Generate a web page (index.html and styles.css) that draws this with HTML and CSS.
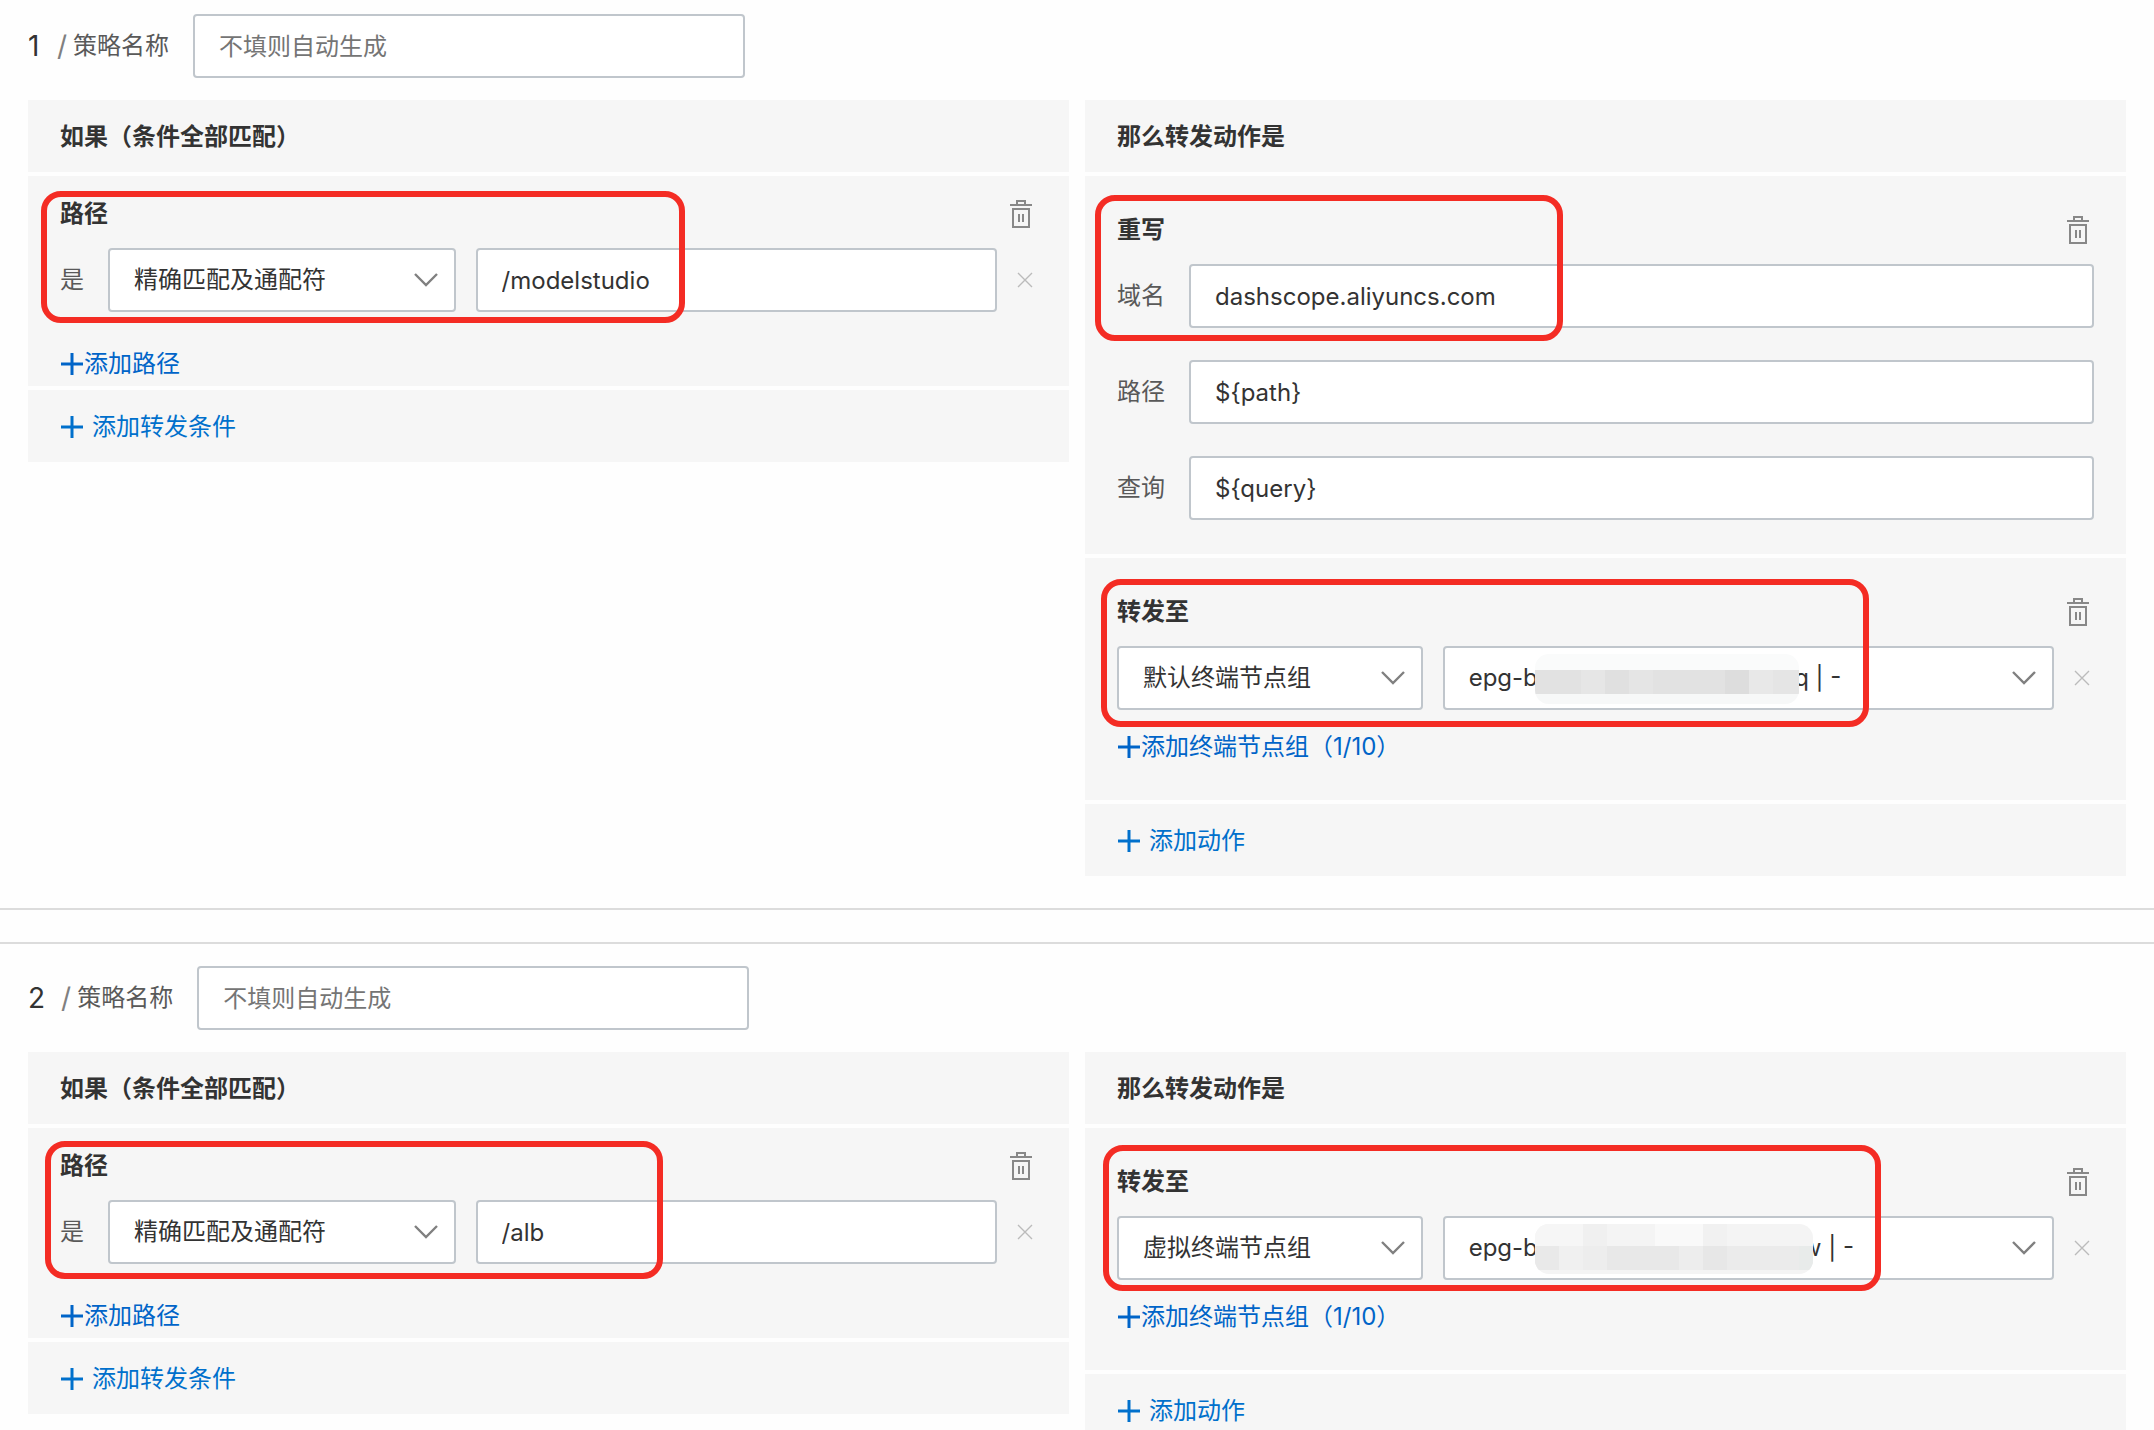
FILE: index.html
```html
<!DOCTYPE html>
<html lang="zh-CN">
<head>
    <meta charset="UTF-8">
    <meta name="viewport" content="width=device-width, initial-scale=1.0">
    <title>转发策略</title>
    <link rel="stylesheet" href="styles.css">
</head>
<body>
    <!-- shared icons -->
    <svg class="sprite" aria-hidden="true">
        <symbol id="trash" viewBox="0 0 22 28">
            <path d="M0 5H22M7 4V1H15V4M3 9H19V27H3ZM9 14V22M13 14V22" fill="none" stroke="currentColor" stroke-width="2"/>
        </symbol>
        <symbol id="close" viewBox="0 0 16 16">
            <path d="M1 1L15 15M15 1L1 15" fill="none" stroke="currentColor" stroke-width="1.4"/>
        </symbol>
        <symbol id="plus" viewBox="0 0 24 24">
            <path d="M1 12H23M12 1V23" fill="none" stroke="currentColor" stroke-width="3"/>
        </symbol>
        <symbol id="arrow" viewBox="0 0 24 14">
            <path d="M1 1L12 12L23 1" fill="none" stroke="currentColor" stroke-width="2.4"/>
        </symbol>
    </svg>

    <section class="rule">
        <div class="rule-name">
            <span class="rule-no">1</span>
            <span class="slash">/</span>
            <label for="name1">策略名称</label>
            <input class="field" type="text" id="name1" placeholder="不填则自动生成">
        </div>
        <div class="columns">
            <div class="column">
                <h2 class="block title">如果（条件全部匹配）</h2>
                <div class="block condition">
                    <div class="block-head">
                        <h3>路径</h3>
                        <button class="icon-btn" type="button" aria-label="删除"><svg width="22" height="28"><use href="#trash"/></svg></button>
                    </div>
                    <div class="row">
                        <label for="match1">是</label>
                        <div class="pair">
                            <div class="select">
                                <select class="field" id="match1"><option>精确匹配及通配符</option></select>
                                <svg class="arrow" width="24" height="14"><use href="#arrow"/></svg>
                            </div>
                            <input class="field" type="text" value="/modelstudio" aria-label="路径">
                        </div>
                        <button class="close-btn" type="button" aria-label="移除"><svg width="16" height="16"><use href="#close"/></svg></button>
                    </div>
                    <a class="add-item" href="#"><svg width="24" height="24"><use href="#plus"/></svg>添加路径</a>
                    <div class="mark mark-path1"></div>
                </div>
                <div class="block add-block">
                    <a href="#"><svg width="24" height="24"><use href="#plus"/></svg>添加转发条件</a>
                </div>
            </div>

            <div class="column">
                <h2 class="block title">那么转发动作是</h2>
                <div class="block action">
                    <div class="block-head">
                        <h3>重写</h3>
                        <button class="icon-btn" type="button" aria-label="删除"><svg width="22" height="28"><use href="#trash"/></svg></button>
                    </div>
                    <div class="rows">
                        <div class="row">
                            <label for="host">域名</label>
                            <input class="field" type="text" id="host" value="dashscope.aliyuncs.com">
                        </div>
                        <div class="row">
                            <label for="path">路径</label>
                            <input class="field" type="text" id="path" value="${path}">
                        </div>
                        <div class="row">
                            <label for="query">查询</label>
                            <input class="field" type="text" id="query" value="${query}">
                        </div>
                    </div>
                    <div class="mark mark-host"></div>
                </div>
                <div class="block action forward">
                    <div class="block-head">
                        <h3>转发至</h3>
                        <button class="icon-btn" type="button" aria-label="删除"><svg width="22" height="28"><use href="#trash"/></svg></button>
                    </div>
                    <div class="row">
                        <div class="pair">
                            <div class="select">
                                <select class="field" aria-label="终端节点组类型"><option>默认终端节点组</option></select>
                                <svg class="arrow" width="24" height="14"><use href="#arrow"/></svg>
                            </div>
                            <div class="select">
                                <select class="field" aria-label="终端节点组"><option>epg-b&emsp;&emsp;&emsp;&emsp;&emsp;&emsp;&emsp;&emsp;&emsp;&emsp;&ensp;&thinsp;q | -</option></select>
                                <svg class="mosaic" width="264" height="50" shape-rendering="crispEdges">
                                    <rect width="264" height="50" fill="#fafbfb"/>
                                    <rect y="40" width="264" height="10" fill="#f7f8f8"/>
                                    <g transform="translate(0 16)">
                                        <rect width="264" height="24" fill="#e2e2e2"/>
                                        <rect x="46" width="24" height="24" fill="#e6e6e6"/>
                                        <rect x="70" width="24" height="24" fill="#e0e0e0"/>
                                        <rect x="94" width="24" height="24" fill="#e5e5e5"/>
                                        <rect x="190" width="24" height="24" fill="#dddddd"/>
                                        <rect x="214" width="24" height="24" fill="#e8e8e8"/>
                                        <rect x="238" width="26" height="24" fill="#e5e5e5"/>
                                    </g>
                                </svg>
                                <svg class="arrow" width="24" height="14"><use href="#arrow"/></svg>
                            </div>
                        </div>
                        <button class="close-btn" type="button" aria-label="移除"><svg width="16" height="16"><use href="#close"/></svg></button>
                    </div>
                    <a class="add-item" href="#"><svg width="24" height="24"><use href="#plus"/></svg>添加终端节点组（1/10）</a>
                    <div class="mark mark-forward1"></div>
                </div>
                <div class="block add-block">
                    <a href="#"><svg width="24" height="24"><use href="#plus"/></svg>添加动作</a>
                </div>
            </div>
        </div>
    </section>

    <section class="rule">
        <div class="rule-name">
            <span class="rule-no">2</span>
            <span class="slash">/</span>
            <label for="name2">策略名称</label>
            <input class="field" type="text" id="name2" placeholder="不填则自动生成">
        </div>
        <div class="columns">
            <div class="column">
                <h2 class="block title">如果（条件全部匹配）</h2>
                <div class="block condition">
                    <div class="block-head">
                        <h3>路径</h3>
                        <button class="icon-btn" type="button" aria-label="删除"><svg width="22" height="28"><use href="#trash"/></svg></button>
                    </div>
                    <div class="row">
                        <label for="match2">是</label>
                        <div class="pair">
                            <div class="select">
                                <select class="field" id="match2"><option>精确匹配及通配符</option></select>
                                <svg class="arrow" width="24" height="14"><use href="#arrow"/></svg>
                            </div>
                            <input class="field" type="text" value="/alb" aria-label="路径">
                        </div>
                        <button class="close-btn" type="button" aria-label="移除"><svg width="16" height="16"><use href="#close"/></svg></button>
                    </div>
                    <a class="add-item" href="#"><svg width="24" height="24"><use href="#plus"/></svg>添加路径</a>
                    <div class="mark mark-path2"></div>
                </div>
                <div class="block add-block">
                    <a href="#"><svg width="24" height="24"><use href="#plus"/></svg>添加转发条件</a>
                </div>
            </div>

            <div class="column">
                <h2 class="block title">那么转发动作是</h2>
                <div class="block action forward">
                    <div class="block-head">
                        <h3>转发至</h3>
                        <button class="icon-btn" type="button" aria-label="删除"><svg width="22" height="28"><use href="#trash"/></svg></button>
                    </div>
                    <div class="row">
                        <div class="pair">
                            <div class="select">
                                <select class="field" aria-label="终端节点组类型"><option>虚拟终端节点组</option></select>
                                <svg class="arrow" width="24" height="14"><use href="#arrow"/></svg>
                            </div>
                            <div class="select">
                                <select class="field" aria-label="终端节点组"><option>epg-b&emsp;&emsp;&emsp;&emsp;&emsp;&emsp;&emsp;&emsp;&emsp;&emsp;&emsp;w | -</option></select>
                                <svg class="mosaic" width="278" height="50" shape-rendering="crispEdges">
                                    <rect width="278" height="50" fill="#f4f4f4"/>
                                    <rect width="48" height="22" fill="#f6f6f6"/>
                                    <rect x="48" width="24" height="22" fill="#f0f0f0"/>
                                    <rect x="120" width="48" height="22" fill="#f9f9f9"/>
                                    <rect x="168" width="24" height="22" fill="#f1f1f1"/>
                                    <g transform="translate(0 22)">
                                        <rect width="278" height="24" fill="#ebebeb"/>
                                        <rect width="24" height="24" fill="#e9e9e9"/>
                                        <rect x="24" width="24" height="24" fill="#f0f0f0"/>
                                        <rect x="48" width="24" height="24" fill="#ededed"/>
                                        <rect x="72" width="72" height="24" fill="#e8e8e8"/>
                                        <rect x="144" width="24" height="24" fill="#ededed"/>
                                        <rect x="168" width="24" height="24" fill="#e7e7e7"/>
                                        <rect x="264" width="14" height="24" fill="#e8ebea"/>
                                    </g>
                                </svg>
                                <svg class="arrow" width="24" height="14"><use href="#arrow"/></svg>
                            </div>
                        </div>
                        <button class="close-btn" type="button" aria-label="移除"><svg width="16" height="16"><use href="#close"/></svg></button>
                    </div>
                    <a class="add-item" href="#"><svg width="24" height="24"><use href="#plus"/></svg>添加终端节点组（1/10）</a>
                    <div class="mark mark-forward2"></div>
                </div>
                <div class="block add-block">
                    <a href="#"><svg width="24" height="24"><use href="#plus"/></svg>添加动作</a>
                </div>
            </div>
        </div>
    </section>
</body>
</html>
```
FILE: styles.css
```css
* {
    margin: 0;
    padding: 0;
    box-sizing: border-box;
}
body {
    height: 100vh;
    overflow: hidden;
    background-color: #fefefe;
    color: #333;
    font-family: Inter, "Noto Sans CJK SC", sans-serif;
    font-size: 24px;
    line-height: 28px;
}
input, select, button {
    font: inherit;
    color: inherit;
}
button {
    border: none;
    background: none;
    cursor: pointer;
}
a {
    color: #0070cc;
    text-decoration: none;
}
svg {
    display: block;
    flex: none;
}
.sprite {
    position: absolute;
    width: 0;
    height: 0;
}

/* rule card */
.rule {
    padding: 14px 28px 32px;
    border-bottom: 2px solid #dcdcdc;
}
.rule + .rule {
    margin-top: 32px;
    padding-top: 22px;
    border-top: 2px solid #dcdcdc;
}
.rule-name {
    display: flex;
    align-items: center;
    margin-bottom: 22px;
}
.rule-no {
    min-width: 13px;
    font-size: 28px;
}
.slash {
    margin: 0 6px 0 16px;
    font-size: 28px;
    color: #808080;
}
.rule-name .field {
    width: 552px;
    margin-left: 24px;
}
label {
    color: #595959;
    white-space: nowrap;
}

/* text boxes and drop-downs */
.field {
    width: 100%;
    height: 64px;
    padding: 0 24px;
    border: 2px solid #c0c6cc;
    border-radius: 4px;
    background-color: #fff;
}
.field::placeholder {
    color: #757575;
}
.select {
    position: relative;
}
.select .field {
    display: block;
    appearance: none;
}
.arrow {
    position: absolute;
    top: 25px;
    right: 18px;
    color: #808080;
    pointer-events: none;
}
.mosaic {
    position: absolute;
    top: 8px;
    left: 92px;
    border-radius: 14px;
}

/* columns */
.columns {
    display: flex;
    align-items: flex-start;
    gap: 16px;
}
.column {
    flex: 1;
    display: flex;
    flex-direction: column;
    gap: 4px;
}
.block {
    position: relative;
    padding: 0 32px;
    background-color: #f6f6f6;
}
.title, .add-block {
    padding-top: 23px;
    padding-bottom: 21px;
}
h2, h3 {
    font-size: 24px;
    font-weight: 600;
}
.condition {
    padding-top: 24px;
    padding-bottom: 8px;
}
.action {
    padding-top: 40px;
    padding-bottom: 34px;
}
.forward {
    padding-bottom: 39px;
}
.block-head {
    display: flex;
    justify-content: space-between;
    margin-bottom: 20px;
}
.icon-btn {
    width: 32px;
    padding: 0 5px;
    color: #888;
}
.rows {
    display: grid;
    gap: 32px;
}
.row {
    display: flex;
    align-items: center;
}
.row label {
    margin-right: 24px;
}
.pair {
    flex: 1;
    display: grid;
    grid-template-columns: 1fr 2fr;
    gap: 20px;
}
.condition .pair {
    grid-template-columns: 2fr 3fr;
}
.close-btn {
    width: 24px;
    margin-left: 16px;
    padding: 0 4px;
    color: #bbb;
}
.add-item, .add-block a {
    display: flex;
    align-items: center;
}
.add-item {
    color: #0064c8;
    margin-top: 23px;
}
.condition .add-item {
    margin-top: 38px;
}
.add-block a {
    gap: 8px;
}

/* red highlight frames */
.mark {
    position: absolute;
    border: 6px solid #f42c24;
    border-radius: 20px;
    pointer-events: none;
}
.mark-path1 {
    top: 15px;
    left: 13px;
    width: 644px;
    height: 132px;
}
.mark-host {
    top: 19px;
    left: 10px;
    width: 468px;
    height: 146px;
}
.mark-forward1 {
    top: 21px;
    left: 16px;
    width: 768px;
    height: 148px;
}
.mark-path2 {
    top: 13px;
    left: 17px;
    width: 618px;
    height: 138px;
}
.mark-forward2 {
    top: 17px;
    left: 18px;
    width: 778px;
    height: 146px;
}
```
